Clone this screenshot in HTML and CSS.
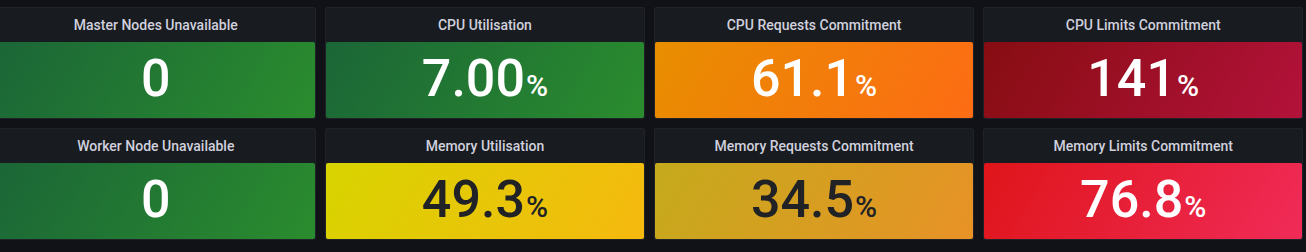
FILE: index.html
```html
<!DOCTYPE html>
<html lang="en">

<head>
  <meta charset="UTF-8">
  <meta name="viewport" content="width=device-width, initial-scale=1.0">
  <title>Cluster Overview</title>
  <link rel="stylesheet" href="styles.css">
</head>

<body>
  <div class="board">
    <div class="panel">
      <div class="title">Master Nodes Unavailable</div>
      <div class="stat green"><span class="num">0</span></div>
    </div>
    <div class="panel">
      <div class="title">CPU Utilisation</div>
      <div class="stat green"><span class="num">7.00</span><span class="unit">%</span></div>
    </div>
    <div class="panel">
      <div class="title">CPU Requests Commitment</div>
      <div class="stat orange"><span class="num">61.1</span><span class="unit">%</span></div>
    </div>
    <div class="panel">
      <div class="title">CPU Limits Commitment</div>
      <div class="stat darkred"><span class="num">141</span><span class="unit">%</span></div>
    </div>

    <div class="panel">
      <div class="title">Worker Node Unavailable</div>
      <div class="stat green"><span class="num">0</span></div>
    </div>
    <div class="panel">
      <div class="title">Memory Utilisation</div>
      <div class="stat yellow"><span class="num">49.3</span><span class="unit">%</span></div>
    </div>
    <div class="panel">
      <div class="title">Memory Requests Commitment</div>
      <div class="stat amber"><span class="num">34.5</span><span class="unit">%</span></div>
    </div>
    <div class="panel">
      <div class="title">Memory Limits Commitment</div>
      <div class="stat red"><span class="num">76.8</span><span class="unit">%</span></div>
    </div>
  </div>
</body>

</html>
```

FILE: styles.css
```css
* {
  padding: 0;
  margin: 0;
  box-sizing: border-box;
}

body {
  background-color: #111217;
  font-family: Roboto, Inter, "Noto Sans", sans-serif;
  overflow: hidden;
}

.board {
  display: grid;
  grid-template-columns: repeat(4, 1fr);
  grid-auto-rows: 112px;
  column-gap: 9.5px;
  row-gap: 9px;
  width: 1307px;
  margin: 7px 0 0 -4px;
}

.panel {
  display: flex;
  flex-direction: column;
  background-color: #181b1f;
  border: 1px solid #202228;
  border-radius: 2px;
}

.title {
  height: 34px;
  display: flex;
  justify-content: center;
  align-items: center;
  color: #d0d0de;
  font-size: 14px;
  font-weight: 500;
  padding-bottom: 1px;
}

.stat {
  flex: 1;
  display: flex;
  justify-content: center;
  align-items: baseline;
  border-radius: 2px;
  color: #fff;
  padding-top: 6px;
}

.num {
  font-size: 52px;
  font-weight: 500;
}

.unit {
  font-size: 30px;
  font-weight: 500;
  margin-left: 1px;
}

.green {
  background: linear-gradient(120deg, #1b6637, #2a8c2e);
}

.orange {
  background: linear-gradient(120deg, #e88e00, #fd6c14);
}

.darkred {
  background: linear-gradient(120deg, #870d12, #b3123a);
}

.yellow {
  background: linear-gradient(120deg, #d8d400, #f6b90f);
  color: #202226;
}

.amber {
  background: linear-gradient(120deg, #c5aa1c, #e89226);
  color: #202226;
}

.red {
  background: linear-gradient(120deg, #df151a, #f02b58);
}
```
